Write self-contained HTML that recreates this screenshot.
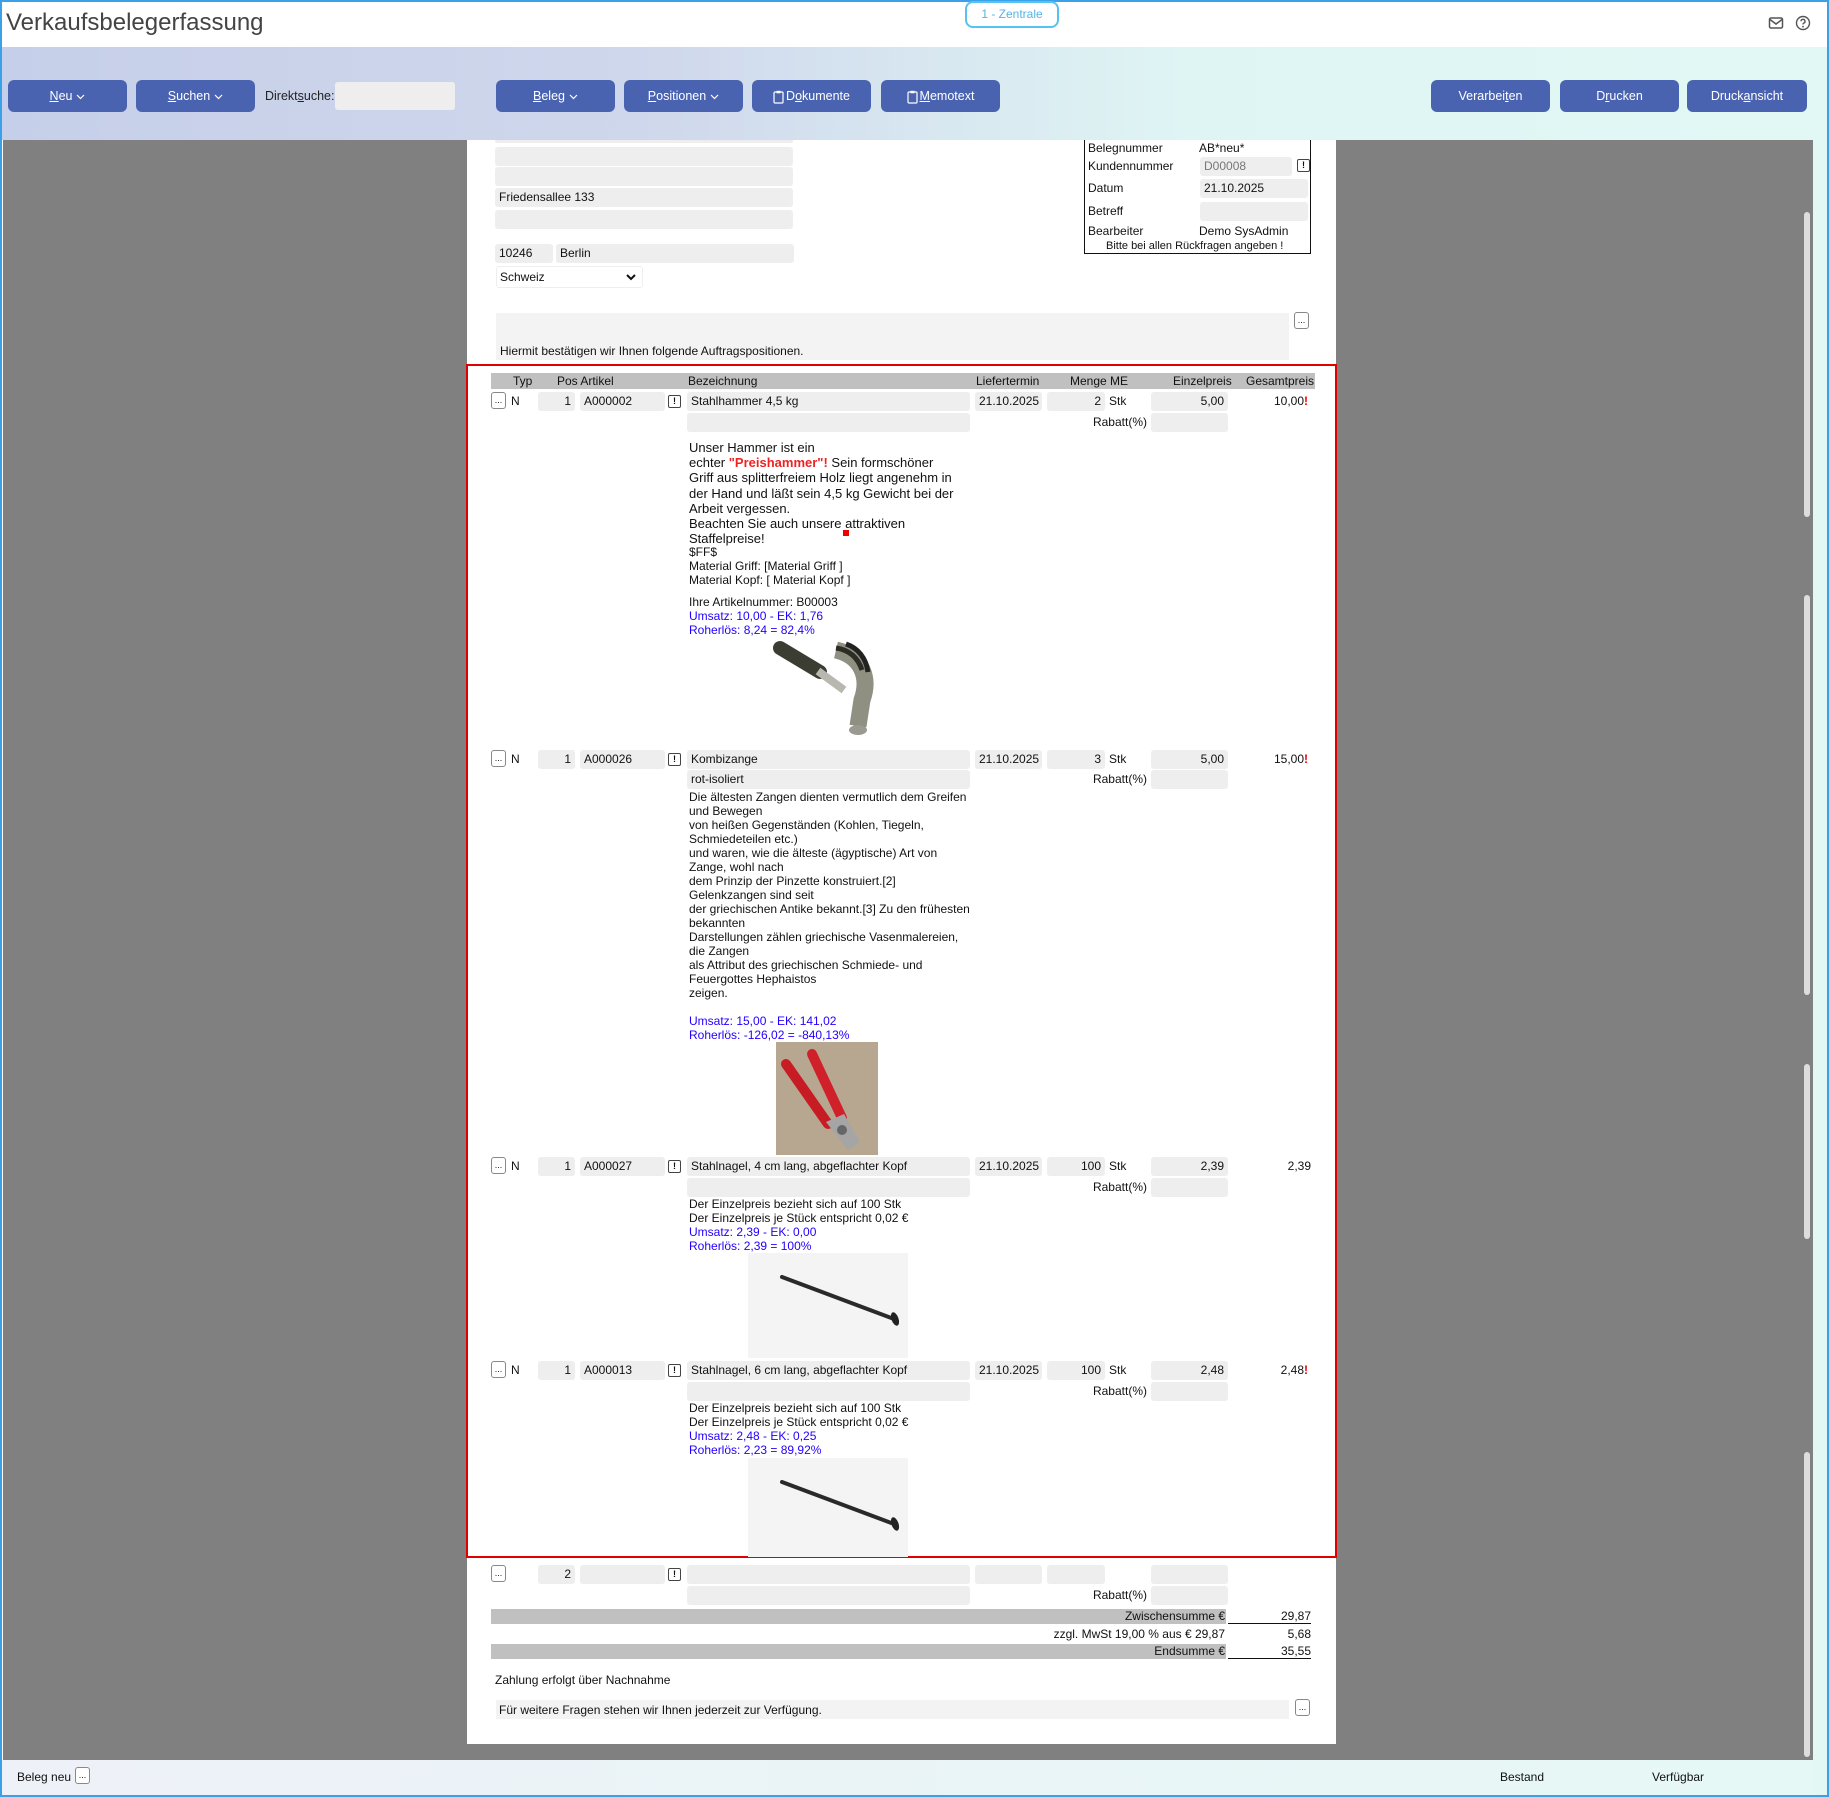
<!DOCTYPE html>
<html><head><meta charset="utf-8">
<style>
*{margin:0;padding:0;box-sizing:border-box}
body{width:1829px;height:1797px;position:relative;overflow:hidden;font-family:"Liberation Sans",Arial,sans-serif;font-size:12px;color:#111;background:#fff}
.a{position:absolute;white-space:nowrap}
.f{position:absolute;background:#eee;border-radius:3px;height:19px;line-height:19px;padding:0 4px;white-space:nowrap;font-size:12px}
.r{text-align:right}
.btn{position:absolute;top:80px;height:32px;background:#4a63b0;color:#fff;border-radius:6px;font-size:12.5px;line-height:32px;text-align:center}
.btn svg{vertical-align:middle;margin-left:4px}
.dd{position:absolute;width:15px;height:17px;border:1px solid #888;border-radius:3px;background:#fff;font-size:9px;line-height:14px;text-align:center}
.ex{position:absolute;width:13px;height:13px;border:1.5px solid #444;border-radius:2px;font-size:9px;line-height:10px;text-align:center;font-weight:bold}
.desc{position:absolute;left:689px;font-size:12px;line-height:14px;white-space:nowrap}
.blue{color:#2200ff}
.sb{position:absolute;left:1804px;width:6px;background:#ddd;border-radius:3px}
</style></head><body>
<div class="a" style="left:0;top:0;width:1829px;height:1797px;border:2px solid #3aa0e8"></div>
<div class="a" style="left:6px;top:9px;font-size:24px;color:#444">Verkaufsbelegerfassung</div>
<div class="a" style="left:965px;top:1px;width:94px;height:27px;border:2.5px solid #55c3f0;border-radius:8px;color:#55b5e5;font-size:12px;line-height:22px;text-align:center">1 - Zentrale</div>
<svg class="a" style="left:1768px;top:16px" width="16" height="14" viewBox="0 0 16 14"><rect x="1.5" y="2" width="13" height="10" rx="1.5" fill="none" stroke="#555" stroke-width="1.5"/><path d="M2 3.5 L8 8 L14 3.5" fill="none" stroke="#555" stroke-width="1.5"/></svg>
<svg class="a" style="left:1795px;top:15px" width="16" height="16" viewBox="0 0 16 16"><circle cx="8" cy="8" r="6.5" fill="none" stroke="#555" stroke-width="1.4"/><path d="M6 6.3a2 2 0 1 1 2.6 1.9c-.5.2-.6.6-.6 1.3" fill="none" stroke="#555" stroke-width="1.4"/><circle cx="8" cy="11.6" r=".9" fill="#555"/></svg>
<div class="a" style="left:2px;top:47px;width:1825px;height:93px;background:linear-gradient(90deg,#c6cfe9 0%,#cfd7ec 35%,#dff5f4 65%,#e2f8f5 100%)"></div>
<div class="btn" style="left:8px;width:119px"><u>N</u>eu<svg width="9" height="6" viewBox="0 0 9 6"><path d="M1 1 L4.5 4.5 L8 1" fill="none" stroke="#fff" stroke-width="1.2"/></svg></div>
<div class="btn" style="left:136px;width:119px"><u>S</u>uchen<svg width="9" height="6" viewBox="0 0 9 6"><path d="M1 1 L4.5 4.5 L8 1" fill="none" stroke="#fff" stroke-width="1.2"/></svg></div>
<div class="a" style="left:265px;top:89px;font-size:12.5px;color:#222">Direkt<u>s</u>uche:</div>
<div class="a" style="left:335px;top:82px;width:120px;height:28px;background:#eee;border-radius:3px"></div>
<div class="btn" style="left:496px;width:119px"><u>B</u>eleg<svg width="9" height="6" viewBox="0 0 9 6"><path d="M1 1 L4.5 4.5 L8 1" fill="none" stroke="#fff" stroke-width="1.2"/></svg></div>
<div class="btn" style="left:624px;width:119px"><u>P</u>ositionen<svg width="9" height="6" viewBox="0 0 9 6"><path d="M1 1 L4.5 4.5 L8 1" fill="none" stroke="#fff" stroke-width="1.2"/></svg></div>
<div class="btn" style="left:752px;width:119px"><svg style="margin:0 2px 0 0" width="11" height="14" viewBox="0 0 11 14"><rect x="1" y="2" width="9" height="11" rx="1" fill="none" stroke="#fff" stroke-width="1.2"/><rect x="3.5" y="0.8" width="4" height="2.5" fill="#fff"/></svg>D<u>o</u>kumente</div>
<div class="btn" style="left:881px;width:119px"><svg style="margin:0 2px 0 0" width="11" height="14" viewBox="0 0 11 14"><rect x="1" y="2" width="9" height="11" rx="1" fill="none" stroke="#fff" stroke-width="1.2"/><rect x="3.5" y="0.8" width="4" height="2.5" fill="#fff"/></svg><u>M</u>emotext</div>
<div class="btn" style="left:1431px;width:119px">Verarbei<u>t</u>en</div>
<div class="btn" style="left:1560px;width:119px">D<u>r</u>ucken</div>
<div class="btn" style="left:1687px;width:120px">Druck<u>a</u>nsicht</div>
<div class="a" style="left:3px;top:140px;width:1810px;height:1620px;background:#808080"></div>
<div class="a" style="left:1813px;top:140px;width:14px;height:1655px;background:#e2f8f5"></div>
<div class="sb" style="top:212px;height:305px"></div>
<div class="sb" style="top:595px;height:400px"></div>
<div class="sb" style="top:1064px;height:175px"></div>
<div class="sb" style="top:1452px;height:305px"></div>
<div class="a" style="left:2px;top:1760px;width:1811px;height:35px;background:linear-gradient(90deg,#eef1f8,#e6f8f6)"></div>
<div class="a" style="left:17px;top:1770px;font-size:12px">Beleg neu</div>
<div class="dd" style="left:75px;top:1767px">...</div>
<div class="a" style="left:1500px;top:1770px">Bestand</div>
<div class="a" style="left:1652px;top:1770px">Verfügbar</div>
<div class="a" style="left:467px;top:140px;width:869px;height:1604px;background:#fff"></div>
<div class="f" style="left:495px;top:140px;width:298px;height:3px"></div>
<div class="f" style="left:495px;top:147px;width:298px"></div>
<div class="f" style="left:495px;top:167px;width:298px"></div>
<div class="f" style="left:495px;top:188px;width:298px">Friedensallee 133</div>
<div class="f" style="left:495px;top:210px;width:298px"></div>
<div class="f" style="left:495px;top:244px;width:58px">10246</div>
<div class="f" style="left:556px;top:244px;width:238px">Berlin</div>
<div class="a" style="left:496px;top:266px;width:147px;height:22px;border:1px solid #eee;border-radius:3px;line-height:20px;padding-left:3px">Schweiz<svg style="position:absolute;right:6px;top:7px" width="10" height="7" viewBox="0 0 10 7"><path d="M1 1 L5 5 L9 1" fill="none" stroke="#111" stroke-width="2"/></svg></div>
<div class="a" style="left:496px;top:313px;width:793px;height:47px;background:#f3f3f3"></div>
<div class="a" style="left:500px;top:344px">Hiermit bestätigen wir Ihnen folgende Auftragspositionen.</div>
<div class="dd" style="left:1294px;top:312px">...</div>
<div class="a" style="left:1084px;top:140px;width:227px;height:114px;border:1.5px solid #111;border-top:none"></div>
<div class="a" style="left:1088px;top:141px">Belegnummer</div><div class="a" style="left:1199px;top:141px">AB*neu*</div>
<div class="a" style="left:1088px;top:159px">Kundennummer</div><div class="f" style="left:1200px;top:157px;width:92px;color:#777">D00008</div><div class="ex" style="left:1297px;top:159px">!</div>
<div class="a" style="left:1088px;top:181px">Datum</div><div class="f" style="left:1200px;top:179px;width:108px">21.10.2025</div>
<div class="a" style="left:1088px;top:204px">Betreff</div><div class="f" style="left:1200px;top:202px;width:108px"></div>
<div class="a" style="left:1088px;top:224px">Bearbeiter</div><div class="a" style="left:1199px;top:224px">Demo SysAdmin</div>
<div class="a" style="left:1106px;top:240px;font-size:11px">Bitte bei allen Rückfragen angeben !</div>
<div class="a" style="left:466px;top:364px;width:871px;height:1194px;border:2.5px solid #e00000"></div>
<div class="a" style="left:491px;top:373px;width:824px;height:16px;background:#c0c0c0"></div>
<div class="a" style="left:513px;top:374px">Typ</div>
<div class="a" style="left:557px;top:374px">Pos Artikel</div>
<div class="a" style="left:688px;top:374px">Bezeichnung</div>
<div class="a" style="left:976px;top:374px">Liefertermin</div>
<div class="a" style="left:1070px;top:374px">Menge ME</div>
<div class="a" style="left:1173px;top:374px">Einzelpreis</div>
<div class="a" style="left:1246px;top:374px">Gesamtpreis</div>

<div class="dd" style="left:491px;top:392px">...</div><div class="a" style="left:511px;top:394px">N</div>
<div class="f r" style="left:538px;top:392px;width:37px">1</div>
<div class="f" style="left:580px;top:392px;width:85px">A000002</div>
<div class="ex" style="left:668px;top:395px">!</div>
<div class="f" style="left:687px;top:392px;width:283px">Stahlhammer 4,5 kg</div>
<div class="f" style="left:975px;top:392px;width:67px">21.10.2025</div>
<div class="f r" style="left:1047px;top:392px;width:58px">2</div><div class="a" style="left:1109px;top:394px">Stk</div>
<div class="f r" style="left:1151px;top:392px;width:77px">5,00</div>
<div class="a r" style="left:1240px;top:394px;width:68px">10,00<span style="color:#e00;font-weight:bold">!</span></div>
<div class="f" style="left:687px;top:413px;width:283px"></div>
<div class="a r" style="left:1080px;top:415px;width:67px">Rabatt(%)</div>
<div class="f" style="left:1151px;top:413px;width:77px"></div>
<div class="desc" style="top:440px;font-size:13px;line-height:15.2px">Unser Hammer ist ein<br>echter <b style="color:#e22">"Preishammer"!</b> Sein formschöner<br>Griff aus splitterfreiem Holz liegt angenehm in<br>der Hand und läßt sein 4,5 kg Gewicht bei der<br>Arbeit vergessen.<br>Beachten Sie auch unsere attraktiven<br>Staffelpreise!</div>
<div class="a" style="left:843px;top:530px;width:6px;height:6px;background:#e00"></div>
<div class="desc" style="top:545px">$FF$<br>Material Griff: [Material Griff ]<br>Material Kopf: [ Material Kopf ]</div>
<div class="desc" style="top:595px">Ihre Artikelnummer: B00003<br><span class="blue">Umsatz: 10,00 - EK: 1,76<br>Roherlös: 8,24 = 82,4%</span></div>
<svg class="a" style="left:770px;top:638px" width="110" height="100" viewBox="0 0 110 100">
<path d="M10 10 L50 34" stroke="#3b3d32" stroke-width="14" stroke-linecap="round"/>
<path d="M48 33 L74 52" stroke="#b8b8b0" stroke-width="8"/>
<path d="M66 12 C92 18 100 40 92 62 L88 88" stroke="#8f8f82" stroke-width="17" fill="none"/>
<path d="M66 10 C80 12 88 20 92 32" stroke="#2c2c24" stroke-width="5" fill="none"/>
<path d="M76 6 C88 10 96 20 98 34" stroke="#222" stroke-width="5" fill="none"/>
<ellipse cx="88" cy="92" rx="9" ry="5" fill="#9a9a90"/>
</svg>

<div class="dd" style="left:491px;top:750px">...</div><div class="a" style="left:511px;top:752px">N</div>
<div class="f r" style="left:538px;top:750px;width:37px">1</div>
<div class="f" style="left:580px;top:750px;width:85px">A000026</div>
<div class="ex" style="left:668px;top:753px">!</div>
<div class="f" style="left:687px;top:750px;width:283px">Kombizange</div>
<div class="f" style="left:975px;top:750px;width:67px">21.10.2025</div>
<div class="f r" style="left:1047px;top:750px;width:58px">3</div><div class="a" style="left:1109px;top:752px">Stk</div>
<div class="f r" style="left:1151px;top:750px;width:77px">5,00</div>
<div class="a r" style="left:1240px;top:752px;width:68px">15,00<span style="color:#e00;font-weight:bold">!</span></div>
<div class="f" style="left:687px;top:770px;width:283px">rot-isoliert</div>
<div class="a r" style="left:1080px;top:772px;width:67px">Rabatt(%)</div>
<div class="f" style="left:1151px;top:770px;width:77px"></div>
<div class="desc" style="top:790px">Die ältesten Zangen dienten vermutlich dem Greifen<br>und Bewegen<br>von heißen Gegenständen (Kohlen, Tiegeln,<br>Schmiedeteilen etc.)<br>und waren, wie die älteste (ägyptische) Art von<br>Zange, wohl nach<br>dem Prinzip der Pinzette konstruiert.[2]<br>Gelenkzangen sind seit<br>der griechischen Antike bekannt.[3] Zu den frühesten<br>bekannten<br>Darstellungen zählen griechische Vasenmalereien,<br>die Zangen<br>als Attribut des griechischen Schmiede- und<br>Feuergottes Hephaistos<br>zeigen.</div>
<div class="desc blue" style="top:1014px">Umsatz: 15,00 - EK: 141,02<br>Roherlös: -126,02 = -840,13%</div>
<svg class="a" style="left:776px;top:1042px" width="102" height="113" viewBox="0 0 102 113"><rect width="102" height="113" fill="#b7a690"/><path d="M10 22 L52 82" stroke="#c81c24" stroke-width="10" stroke-linecap="round"/><path d="M36 12 L66 76" stroke="#d0202a" stroke-width="10" stroke-linecap="round"/><path d="M50 80 L68 72 L84 100 L72 108 Z" fill="#a5a5a5"/><circle cx="66" cy="88" r="5" fill="#666"/></svg>

<div class="dd" style="left:491px;top:1157px">...</div><div class="a" style="left:511px;top:1159px">N</div>
<div class="f r" style="left:538px;top:1157px;width:37px">1</div>
<div class="f" style="left:580px;top:1157px;width:85px">A000027</div>
<div class="ex" style="left:668px;top:1160px">!</div>
<div class="f" style="left:687px;top:1157px;width:283px">Stahlnagel, 4 cm lang, abgeflachter Kopf</div>
<div class="f" style="left:975px;top:1157px;width:67px">21.10.2025</div>
<div class="f r" style="left:1047px;top:1157px;width:58px">100</div><div class="a" style="left:1109px;top:1159px">Stk</div>
<div class="f r" style="left:1151px;top:1157px;width:77px">2,39</div>
<div class="a r" style="left:1240px;top:1159px;width:71px">2,39</div>
<div class="f" style="left:687px;top:1178px;width:283px"></div>
<div class="a r" style="left:1080px;top:1180px;width:67px">Rabatt(%)</div>
<div class="f" style="left:1151px;top:1178px;width:77px"></div>
<div class="desc" style="top:1197px">Der Einzelpreis bezieht sich auf 100 Stk<br>Der Einzelpreis je Stück entspricht 0,02 €<br><span class="blue">Umsatz: 2,39 - EK: 0,00<br>Roherlös: 2,39 = 100%</span></div>
<svg class="a" style="left:748px;top:1253px" width="160" height="105" viewBox="0 0 160 105"><rect width="160" height="105" fill="#f4f4f4"/><path d="M34 24 L146 66" stroke="#2a2a2a" stroke-width="4" stroke-linecap="round"/><ellipse cx="147" cy="66" rx="3.5" ry="7" fill="#222" transform="rotate(-20 147 66)"/></svg>

<div class="dd" style="left:491px;top:1361px">...</div><div class="a" style="left:511px;top:1363px">N</div>
<div class="f r" style="left:538px;top:1361px;width:37px">1</div>
<div class="f" style="left:580px;top:1361px;width:85px">A000013</div>
<div class="ex" style="left:668px;top:1364px">!</div>
<div class="f" style="left:687px;top:1361px;width:283px">Stahlnagel, 6 cm lang, abgeflachter Kopf</div>
<div class="f" style="left:975px;top:1361px;width:67px">21.10.2025</div>
<div class="f r" style="left:1047px;top:1361px;width:58px">100</div><div class="a" style="left:1109px;top:1363px">Stk</div>
<div class="f r" style="left:1151px;top:1361px;width:77px">2,48</div>
<div class="a r" style="left:1240px;top:1363px;width:68px">2,48<span style="color:#e00;font-weight:bold">!</span></div>
<div class="f" style="left:687px;top:1382px;width:283px"></div>
<div class="a r" style="left:1080px;top:1384px;width:67px">Rabatt(%)</div>
<div class="f" style="left:1151px;top:1382px;width:77px"></div>
<div class="desc" style="top:1401px">Der Einzelpreis bezieht sich auf 100 Stk<br>Der Einzelpreis je Stück entspricht 0,02 €<br><span class="blue">Umsatz: 2,48 - EK: 0,25<br>Roherlös: 2,23 = 89,92%</span></div>
<svg class="a" style="left:748px;top:1458px" width="160" height="99" viewBox="0 0 160 99"><rect width="160" height="99" fill="#f4f4f4"/><path d="M34 24 L146 66" stroke="#2a2a2a" stroke-width="4" stroke-linecap="round"/><ellipse cx="147" cy="66" rx="3.5" ry="7" fill="#222" transform="rotate(-20 147 66)"/></svg>

<div class="dd" style="left:491px;top:1565px">...</div>
<div class="f r" style="left:538px;top:1565px;width:37px">2</div>
<div class="f" style="left:580px;top:1565px;width:85px"></div>
<div class="ex" style="left:668px;top:1568px">!</div>
<div class="f" style="left:687px;top:1565px;width:283px"></div>
<div class="f" style="left:975px;top:1565px;width:67px"></div>
<div class="f" style="left:1047px;top:1565px;width:58px"></div>
<div class="f" style="left:1151px;top:1565px;width:77px"></div>
<div class="f" style="left:687px;top:1586px;width:283px"></div>
<div class="a r" style="left:1080px;top:1588px;width:67px">Rabatt(%)</div>
<div class="f" style="left:1151px;top:1586px;width:77px"></div>

<div class="a" style="left:491px;top:1609px;width:735px;height:15px;background:#c0c0c0"></div>
<div class="a r" style="left:1000px;top:1609px;width:225px">Zwischensumme €</div>
<div class="a r" style="left:1228px;top:1609px;width:83px;border-bottom:1.5px solid #111">29,87</div>
<div class="a r" style="left:1000px;top:1627px;width:225px">zzgl. MwSt 19,00 % aus € 29,87</div>
<div class="a r" style="left:1228px;top:1627px;width:83px">5,68</div>
<div class="a" style="left:491px;top:1644px;width:735px;height:15px;background:#c0c0c0"></div>
<div class="a r" style="left:1000px;top:1644px;width:225px">Endsumme €</div>
<div class="a r" style="left:1228px;top:1644px;width:83px;border-bottom:1.5px solid #111">35,55</div>
<div class="a" style="left:495px;top:1673px">Zahlung erfolgt über Nachnahme</div>
<div class="a" style="left:496px;top:1700px;width:793px;height:19px;background:#f3f3f3"></div>
<div class="a" style="left:499px;top:1703px">Für weitere Fragen stehen wir Ihnen jederzeit zur Verfügung.</div>
<div class="dd" style="left:1295px;top:1699px">...</div>
</body></html>
